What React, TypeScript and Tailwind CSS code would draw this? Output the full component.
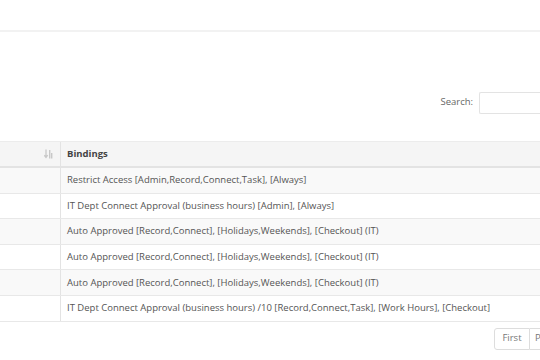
import React from "react";

const rows: string[] = [
  "Restrict Access [Admin,Record,Connect,Task], [Always]",
  "IT Dept Connect Approval (business hours) [Admin], [Always]",
  "Auto Approved [Record,Connect], [Holidays,Weekends], [Checkout] (IT)",
  "Auto Approved [Record,Connect], [Holidays,Weekends], [Checkout] (IT)",
  "Auto Approved [Record,Connect], [Holidays,Weekends], [Checkout] (IT)",
  "IT Dept Connect Approval (business hours) /10 [Record,Connect,Task], [Work Hours], [Checkout]",
];

const SortIcon: React.FC = () => (
  <svg width="9" height="10" viewBox="0 0 9 10" className="text-[#c8c8c8]">
    <path d="M2 0.5v7.5M0.3 6.2L2 8.5l1.7-2.3" stroke="currentColor" strokeWidth="1.3" fill="none" />
    <rect x="5" y="1" width="1.4" height="8.5" fill="currentColor" />
    <rect x="7" y="4" width="1.4" height="5.5" fill="currentColor" />
  </svg>
);

export default function App() {
  return (
    <div
      className="w-[540px] h-[360px] overflow-hidden bg-white text-[#555]"
      style={{ fontFamily: '"Open Sans", sans-serif' }}
    >
      <div className="h-[32px] border-b-2 border-[#f2f2f2]" />
      <div className="flex justify-end items-center pt-[60px] h-[81px]">
        <div className="flex items-center gap-[6px]">
          <span className="text-[9.5px] text-[#666]">Search:</span>
          <div className="w-[61px] h-[22px] border border-[#e3e3e3] rounded-l-[2px] border-r-0" />
        </div>
      </div>
      <div className="h-[28px]" />
      <div className="text-[9.5px]">
        <div className="flex h-[27px] bg-[#f5f5f5] border-t border-[#ececec] border-b-2 border-b-[#e3e3e3]">
          <div className="w-[61px] border-r border-[#e3e3e3] flex items-center justify-end pr-[7px]">
            <SortIcon />
          </div>
          <div className="flex-1 flex items-center pl-[6px] font-bold text-[#444]">Bindings</div>
        </div>
        {rows.map((text, idx) => (
          <div
            key={idx}
            className={
              "flex h-[25.6px] border-b border-[#e8e8e8] " +
              (idx % 2 === 0 ? "bg-[#f9f9f9]" : "bg-white")
            }
          >
            <div className="w-[61px] border-r border-[#e3e3e3]" />
            <div className="flex-1 flex items-center pl-[6px] whitespace-nowrap">{text}</div>
          </div>
        ))}
      </div>
      <div className="flex justify-end pt-[6px]">
        <div className="flex text-[9.5px] text-[#777]">
          <div className="h-[22px] w-[36px] flex items-center justify-center border border-[#ddd] rounded-l-[3px]">First</div>
          <div className="h-[22px] pl-[5px] w-[10px] flex items-center border border-l-0 border-r-0 border-[#ddd]">P</div>
        </div>
      </div>
    </div>
  );
}
